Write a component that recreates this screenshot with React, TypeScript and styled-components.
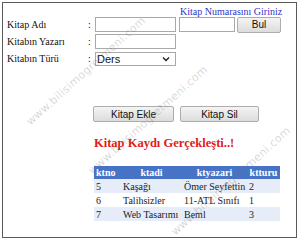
import React from "react";
import styled, {createGlobalStyle} from "styled-components";

const GlobalStyle = createGlobalStyle`
  html, body {
    margin: 0;
    padding: 0;
    background: #fff;
  }
  body {
    width: 300px;
    height: 240px;
    overflow: hidden;
  }
`;

const Frame = styled.div`
  position: relative;
  box-sizing: border-box;
  margin: 2px 0 0 2px;
  width: 295px;
  height: 236px;
  border: 1px solid #5a5a5a;
  background: #fff;
  overflow: hidden;
  padding: 4px 0 0 4px;
  font-family: "Liberation Serif", "Times New Roman", serif;
`;

const Title = styled.div`
  margin-left: 173px;
  height: 10px;
  line-height: 10px;
  font-size: 10px;
  color: #3434c4;
`;

const FormRow = styled.div`
  display: flex;
  align-items: center;
  height: 15px;
  margin-bottom: 2px;
`;

const Label = styled.label`
  width: 81px;
  font-size: 10px;
  color: #111;
`;

const Colon = styled.span`
  width: 7px;
  font-size: 10px;
  color: #111;
`;

const TextInput = styled.input<{$w: number; $ml?: number}>`
  box-sizing: border-box;
  width: ${p => p.$w}px;
  height: 15px;
  margin: 0 0 0 ${p => p.$ml || 0}px;
  padding: 0 2px;
  border: 1px solid #a9a9a9;
  background: #fff;
  outline: none;
`;

const Button = styled.button<{$w: number; $ml?: number}>`
  box-sizing: border-box;
  width: ${p => p.$w}px;
  height: 16px;
  margin: 0 0 0 ${p => p.$ml || 0}px;
  padding: 0;
  border: 1px solid #adadad;
  border-radius: 2px;
  background: linear-gradient(#f4f4f4, #dcdcdc);
  font-family: "Liberation Sans", Arial, sans-serif;
  font-size: 10px;
  color: #111;
`;

const SelectBox = styled.div`
  position: relative;
  box-sizing: border-box;
  width: 81px;
  height: 14px;
  border: 1px solid #a9a9a9;
  display: flex;
  align-items: center;
  padding-left: 1px;
  font-family: "Liberation Sans", Arial, sans-serif;
  font-size: 11px;
  color: #111;

  svg {
    position: absolute;
    right: 5px;
    top: 3px;
  }
`;

const ActionRow = styled.div`
  display: flex;
  margin: 40px 0 0 86px;
`;

const Message = styled.div`
  margin: 14px 0 0 87px;
  height: 14px;
  line-height: 14px;
  font-size: 12.5px;
  font-weight: bold;
  color: #e01b1b;
`;

const Table = styled.table`
  margin: 16px 0 0 87px;
  width: 186px;
  border-collapse: collapse;
  table-layout: fixed;
  font-family: "Liberation Serif", Cambria, serif;
  font-size: 10px;
  color: #222;
`;

const Th = styled.th<{$w: number; $align?: string}>`
  width: ${p => p.$w - 4}px;
  height: 13px;
  padding: 0 2px;
  background: #4673c6;
  color: #fff;
  font-weight: bold;
  text-align: ${p => p.$align || "center"};
  white-space: nowrap;
`;

const Tr = styled.tr<{$shade: boolean}>`
  background: ${p => (p.$shade ? "#e6ecf8" : "#fff")};
`;

const Td = styled.td`
  height: 14px;
  padding: 0 2px;
  white-space: nowrap;
  overflow: hidden;
`;

const Watermark = styled.div<{$x: number; $y: number}>`
  position: absolute;
  left: ${p => p.$x}px;
  top: ${p => p.$y}px;
  transform: translate(-50%, -50%) rotate(-42deg);
  font-family: "DejaVu Sans", Verdana, sans-serif;
  font-size: 11px;
  letter-spacing: 0.3px;
  color: rgba(110, 110, 110, 0.28);
  white-space: nowrap;
  pointer-events: none;
`;

const books = [
  {no: "5", ad: "Kaşağı", yazar: "Ömer Seyfettin", tur: "2"},
  {no: "6", ad: "Talihsizler", yazar: "11-ATL Sınıfı", tur: "1"},
  {no: "7", ad: "Web Tasarımı", yazar: "Beml", tur: "3"},
];

const App = () => {
  return (
    <>
      <GlobalStyle />
      <Frame>
        <Title>Kitap Numarasını Giriniz</Title>
        <FormRow>
          <Label>Kitap Adı</Label>
          <Colon>:</Colon>
          <TextInput $w={81} />
          <TextInput $w={56} $ml={3} />
          <Button $w={44} $ml={2}>Bul</Button>
        </FormRow>
        <FormRow>
          <Label>Kitabın Yazarı</Label>
          <Colon>:</Colon>
          <TextInput $w={81} />
        </FormRow>
        <FormRow>
          <Label>Kitabın Türü</Label>
          <Colon>:</Colon>
          <SelectBox>
            Ders
            <svg width="8" height="6" viewBox="0 0 8 6">
              <path d="M1 1.5 L4 4.5 L7 1.5" fill="none" stroke="#222" strokeWidth="1.4" />
            </svg>
          </SelectBox>
        </FormRow>
        <ActionRow>
          <Button $w={81}>Kitap Ekle</Button>
          <Button $w={79} $ml={6}>Kitap Sil</Button>
        </ActionRow>
        <Message>Kitap Kaydı Gerçekleşti..!</Message>
        <Table>
          <thead>
            <tr>
              <Th $w={27} $align="left">ktno</Th>
              <Th $w={61}>ktadi</Th>
              <Th $w={65}>ktyazari</Th>
              <Th $w={33}>ktturu</Th>
            </tr>
          </thead>
          <tbody>
            {books.map((b, i) => (
              <Tr key={b.no} $shade={i % 2 === 0}>
                <Td>{b.no}</Td>
                <Td>{b.ad}</Td>
                <Td>{b.yazar}</Td>
                <Td>{b.tur}</Td>
              </Tr>
            ))}
          </tbody>
        </Table>
        <Watermark $x={83} $y={68}>www.bilisimogretmeni.com</Watermark>
        <Watermark $x={145} $y={117}>www.bilisimogretmeni.com</Watermark>
        <Watermark $x={228} $y={178}>www.bilisimogretmeni.com</Watermark>
      </Frame>
    </>
  );
};

export default App;
